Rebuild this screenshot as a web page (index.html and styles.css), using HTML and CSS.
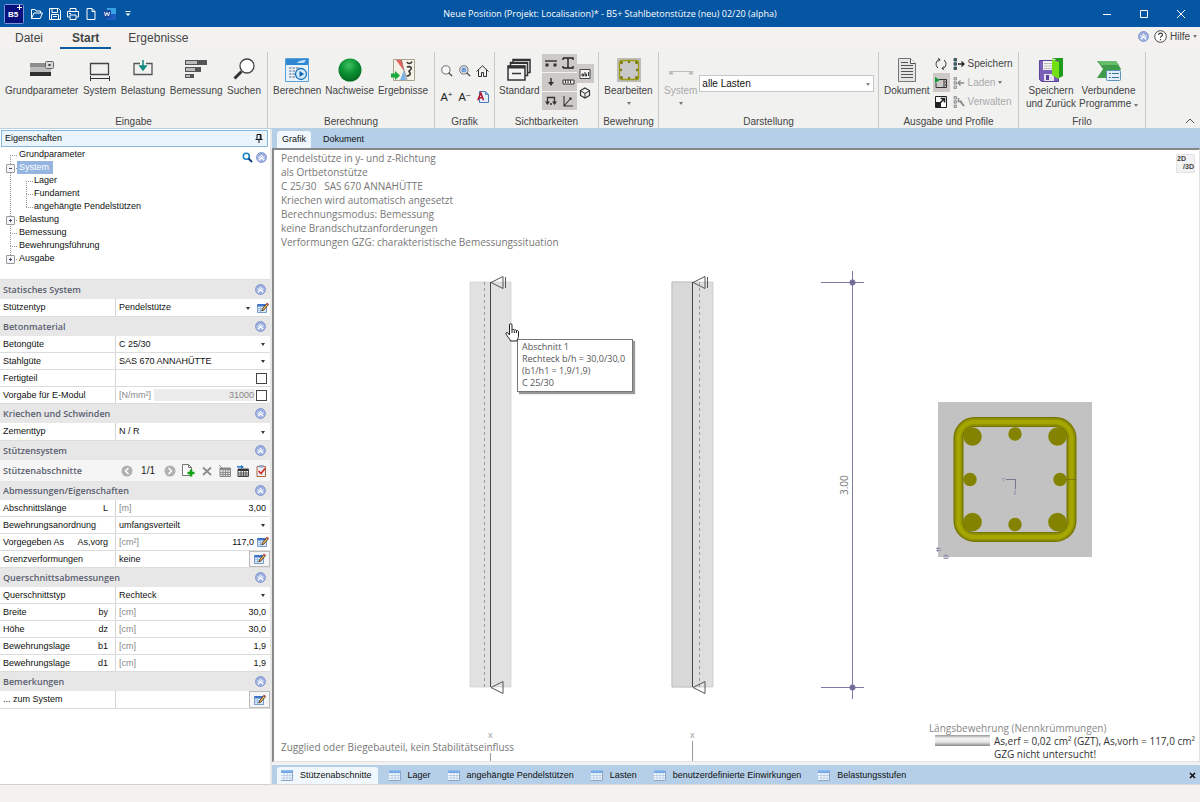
FILE: index.html
```
<!DOCTYPE html>
<html lang="de">
<head>
<meta charset="utf-8">
<title>B5+ Stahlbetonstütze</title>
<link rel="stylesheet" href="styles.css">
</head>
<body>
<svg class="sprite" aria-hidden="true">
  <symbol id="up" viewBox="0 0 12 12"><circle cx="6" cy="6" r="5.400" fill="#9fb4e4" stroke="#7d8fcb"/><path d="M3 6 6 3.200 9 6M3 9 6 6.200 9 9" fill="none" stroke="#fff" stroke-width="1.500"/><path d="M3.300 4.900 6 2.400 8.700 4.900" fill="none" stroke="#5068ba" stroke-width=".7"/></symbol>
  <symbol id="edit" viewBox="0 0 12 12"><path d="M.5 2.500h9v8h-9z" fill="#dcebfa" stroke="#5c86c0" stroke-width=".8"/><path d="M.5 2h9v2.500h-9z" fill="#3f74c8"/><path d="M.5 6.500h6M.5 8.500h5M3.500 4v6" stroke="#8fb2dc" stroke-width=".7"/><path d="m4.800 8.900.8-2.300 4.200-5.200 1.600 1.200-4.300 5.300z" fill="#f0b95c" stroke="#4c3a28" stroke-width=".9"/><path d="m9.400 1.900.9-1.100 1.400 1-.8 1.200z" fill="#d34a4a"/></symbol>
  <symbol id="grid" viewBox="0 0 12 11"><path d="M0 0h12v11H0z" fill="#f4f9fe"/><path d="M0 0h12v3H0z" fill="#72a5e4"/><path d="M0 0h12v1.500H0z" fill="#8fbaf0"/><path d="M0 5.500h12M0 8h12M3 3v8M6 3v8M9 3v8" stroke="#b4c9e2" stroke-width=".8"/><path d="M0 10.500h11.500V1" fill="none" stroke="#8ca4c6"/></symbol>
  <symbol id="lens" viewBox="0 0 14 14"><circle cx="5.700" cy="5.700" r="4.800" fill="#fafafa" stroke="#555"/><path d="m9 9 4 4" stroke="#444" stroke-width="1.500"/></symbol>
</svg>

<div class="app">
  <header class="titlebar">
    <div class="quick">
      <svg class="logo" width="20" height="20" viewBox="0 0 20 20"><rect x=".5" y=".5" width="19" height="19" rx="1" fill="#08117c" stroke="#7c98d6"/><text x="4" y="13" class="logo-text">B5</text><path d="M15.500 1v5M13 3.500h5" stroke="#fff"/></svg>
      <button aria-label="Öffnen"><svg width="12" height="12" viewBox="0 0 12 12"><path d="M.5 10.500v-9h3.500l1 1.500h4.500v2M.5 10.500 3 5h8.500l-2.300 5.500z" class="w"/></svg></button>
      <button aria-label="Speichern"><svg width="12" height="12" viewBox="0 0 12 12"><path d="M.5.5h9l2 2v9H.5zM3 .5v4h5.500v-4M2.500 11.500v-5h7v5M4 8.500h4" class="w"/></svg></button>
      <button aria-label="Drucken"><svg width="12" height="12" viewBox="0 0 12 12"><path d="M3 3.500v-3h6v3M2.500 9h-2V3.500h11V9h-2M3 7h6v4.500H3zM2 5.500h2" class="w"/></svg></button>
      <button aria-label="Neu"><svg width="12" height="12" viewBox="0 0 12 12"><path d="M2 .5h5l3 3v8H2zM7 .5v3h3" class="w"/></svg></button>
      <button aria-label="Word"><svg width="13" height="12" viewBox="0 0 13 12"><path d="M4 0h9v12H4z" fill="#35a2e6"/><path d="M4 6h9v6H4z" fill="#1c5fc4"/><rect y="2" width="8" height="8" fill="#1a4aa0"/><path d="m1.500 4 1 4L4 4.500 5.500 8l1-4" stroke="#fff" fill="none" stroke-width=".9"/></svg></button>
      <button aria-label="Mehr"><svg width="12" height="12" viewBox="0 0 12 12"><path d="M3.500 3.500h5" stroke="#fff"/><path d="M3.500 5.500h5L6 8z" fill="#fff"/></svg></button>
    </div>
    <h1>Neue Position (Projekt: Localisation)* - B5+ Stahlbetonstütze (neu) 02/20 (alpha)</h1>
    <div class="winbtns">
      <button aria-label="Minimieren"><svg width="10" height="10"><path d="M1 5.500h8" stroke="#fff"/></svg></button>
      <button aria-label="Maximieren"><svg width="10" height="10"><path d="M1.500 1.500h7v7h-7z" class="w"/></svg></button>
      <button aria-label="Schließen"><svg width="10" height="10"><path d="m1 1 8 8M9 1 1 9" class="w"/></svg></button>
    </div>
  </header>

  <nav class="menu">
    <a href="#">Datei</a><a href="#" class="on">Start</a><a href="#">Ergebnisse</a>
    <button class="help"><svg width="11" height="11"><use href="#up"/></svg><svg width="13" height="13" viewBox="0 0 13 13"><circle cx="6.500" cy="6.500" r="5.800" fill="#fff" stroke="#444"/><path d="M4.600 5c0-2.600 3.900-2.400 3.900-.2 0 1.500-2 1.400-2 3M6.500 9v1.300" fill="none" stroke="#333" stroke-width="1.100"/></svg>Hilfe<i class="tri"></i></button>
  </nav>

  <section class="ribbon">
    <div class="group">
      <div class="tools spread">
        <button class="big"><svg width="26" height="24" viewBox="0 0 26 24"><path d="M1 5h18v4H1z" fill="#8d8d8d"/><path d="M1 9h21v5H1z" fill="#bcbcbc"/><path d="M1 14h21v4H1z" fill="#2f2f2f"/><rect x="16.500" y="3.500" width="8" height="7" rx="1" fill="#d8d8d8" stroke="#666"/><path d="M19.500 6h2v2h-2z" fill="#333"/></svg>Grundparameter</button>
        <button class="big"><svg width="22" height="24" viewBox="0 0 22 24"><path d="M1.500 5.500h18v11h-18z" fill="none" stroke="#444" stroke-width="1.300"/><path d="M1 20.500h20M1.500 18v5M20.500 18v5" stroke="#333"/></svg>System</button>
        <button class="big"><svg width="22" height="24" viewBox="0 0 22 24"><path d="M8 5.500H2v11h18v-11h-6" fill="none" stroke="#555" stroke-width="1.300"/><path d="M11 2v9M8 8l3 4 3-4z" stroke="#158a80" stroke-width="1.500" fill="#158a80"/></svg>Belastung</button>
        <button class="big"><svg width="24" height="24" viewBox="0 0 24 24"><path d="M1 2h22v5H1zM1 9h16v5H1zM1 16h9v4H1z" fill="#555"/><path d="M2 3h11v3H2zM2 10h9v3H2zM2 17h4v2H2z" fill="#bbb"/></svg>Bemessung</button>
        <button class="big"><svg width="24" height="24" viewBox="0 0 24 24"><circle cx="15" cy="8" r="7" fill="#fff" stroke="#444" stroke-width="1.300"/><path d="m9.500 13.500-7 7" stroke="#333" stroke-width="3"/></svg>Suchen</button>
      </div>
      <div class="caption">Eingabe</div>
    </div>

    <div class="group">
      <div class="tools spread">
        <button class="big"><svg width="24" height="24" viewBox="0 0 24 24"><path d="M.5.5h23v23H.5z" fill="#e8f2fb" stroke="#5aa0d8"/><path d="M1 1h22v6H1z" fill="#2f86d2"/><path d="M12 5c2-3 6-3 9-3l-2 3z" fill="#b7dcf6"/><path d="M4 10h11M4 13h8M4 16h7M4 19h8" stroke="#8a9aa8" stroke-width="1.500" stroke-dasharray="2.500 1"/><circle cx="16" cy="16" r="5.500" fill="#d3eafa" stroke="#1973bd" stroke-width="1.300"/><path d="m14.500 13 4.500 3-4.500 3z" fill="#1766ab"/></svg>Berechnen</button>
        <button class="big"><svg width="24" height="24" viewBox="0 0 24 24"><defs><radialGradient id="ball" cx=".45" cy=".3" r=".7"><stop offset="0" stop-color="#3fc15f"/><stop offset=".5" stop-color="#0b9235"/><stop offset="1" stop-color="#046a20"/></radialGradient></defs><circle cx="12" cy="12" r="11.500" fill="url(#ball)"/></svg>Nachweise</button>
        <button class="big"><svg width="24" height="24" viewBox="0 0 24 24"><path d="M2.500 1.500h21v21h-21z" fill="#f4f1e6" stroke="#a9a28f"/><path d="M5 2h6l2 11z" fill="#e8625c"/><path d="M9 22h6l-2-10z" fill="#7db4e8"/><path d="m10 2 6 20" stroke="#777" stroke-width=".7"/><path d="M16 9c3-1 5 0 4 2s-3 2-1.500 3c2 2 0 4-3 4M16 4c1 2 4 2 5-.5" fill="none" stroke="#333" stroke-width="1.600"/><path d="M0 15.500h4V13l5 4.500L4 22v-2.500H0z" fill="#19a83b"/></svg>Ergebnisse</button>
      </div>
      <div class="caption">Berechnung</div>
    </div>

    <div class="group">
      <div class="tools iconset">
        <button aria-label="Zoom"><svg width="12" height="12"><use href="#lens"/></svg></button>
        <button aria-label="Zoom Fenster"><svg width="12" height="12" viewBox="0 0 14 14"><circle cx="5.700" cy="5.700" r="4.800" fill="#fafafa" stroke="#555"/><path d="m9 9 4 4" stroke="#444" stroke-width="1.500"/><path d="M3.500 3.500h4.500v4.500H3.500zM3.500 5.700H8M5.700 3.500V8" fill="#cfe4fa" stroke="#2b6ec2" stroke-width=".8"/></svg></button>
        <button aria-label="Alles"><svg width="13" height="12" viewBox="0 0 13 12"><path d="M.5 6.500 6.500.8l6 5.700M2.500 5v6.500h3v-4h2v4h3V5" fill="none" stroke="#333"/></svg></button>
        <button aria-label="Schrift größer">A<sup>+</sup></button>
        <button aria-label="Schrift kleiner">A<sup>–</sup></button>
        <button aria-label="Schriftart"><svg width="12" height="12" viewBox="0 0 12 12"><path d="M2.500.5h6l3 3v8h-9z" fill="#e3effb" stroke="#4a78b5"/><path d="M8.500.5v3h3" fill="#7fa8dd" stroke="#4a78b5" stroke-width=".7"/><path d="m.8 9.200 3-7.200 2.800 7.200M2 6.700h3.600" fill="none" stroke="#b3122a" stroke-width="1.500"/></svg></button>
      </div>
      <div class="caption">Grafik</div>
    </div>

    <div class="group">
      <div class="tools vis">
        <button class="big"><svg width="24" height="24" viewBox="0 0 24 24"><g fill="#f1f1f1" stroke="#333" stroke-width="1.500"><path d="M6 1.500h17v13H6z"/><path d="M3.500 4.500h17v13h-17z"/><path d="M1 8h17v14H1z"/></g><path d="M6 1h17v2H6zM3.500 4h17v2h-17zM1 7.500h17v3H1z" fill="#333"/><path d="M5 15.500h9" stroke="#333" stroke-width="1.500"/></svg>Standard</button>
        <div class="toggles">
          <button aria-label="Auflager"><svg width="14" height="14" viewBox="0 0 14 14"><path d="M1 5h12" stroke="#222" stroke-width="1.300"/><path d="M1.500 7.500h3v3h-3zM9.500 7.500h3v3h-3z" fill="#333"/></svg></button>
          <button aria-label="Profil"><svg width="14" height="14" viewBox="0 0 14 14"><path d="M2 2h10v2M2 2v2M2 12h10v-2M2 12v-2M7 2v10" fill="none" stroke="#222" stroke-width="1.400"/></svg></button>
          <button aria-label="Last"><svg width="14" height="14" viewBox="0 0 14 14"><path d="M7 3v5" stroke="#333" stroke-width="1.500"/><path d="M4 7h6l-3 4z" fill="#333"/></svg></button>
          <button aria-label="Bemaßung"><svg width="14" height="14" viewBox="0 0 14 14"><path d="M2 5h11v4H2zM4.500 5v3M7 5v3M9.500 5v3" fill="#eee" stroke="#333"/></svg></button>
          <button aria-label="Kräfte"><svg width="14" height="14" viewBox="0 0 14 14"><path d="M3.500 10V3.500h7V10M6 10h2" fill="none" stroke="#333" stroke-width="1.300"/><path d="M1 7.500h5L3.500 11zM8 7.500h5L10.500 11z" fill="#333"/></svg></button>
          <button aria-label="Achsen"><svg width="14" height="14" viewBox="0 0 14 14"><path d="M3 2v10h9M3 12l7-8M8 4h2v2" fill="none" stroke="#333" stroke-width="1.100"/></svg></button>
        </div>
        <div class="toggles2">
          <button class="down" aria-label="Texte"><svg width="12" height="12" viewBox="0 0 12 12"><path d="M1 1.500h10v9H1z" fill="#f4f4f4" stroke="#444"/><path d="M3 8V6h1.500v2zM6 4v4h1.500V6H6M9.500 4v4" fill="none" stroke="#222" stroke-width=".9"/></svg></button>
          <button aria-label="3D"><svg width="12" height="12" viewBox="0 0 12 12"><path d="M6 1 10.500 3.500v5L6 11 1.500 8.500v-5z" fill="none" stroke="#333" stroke-width="1.200"/><path d="m2 4 4 2.500L10 4M6 6.500V11" fill="none" stroke="#333"/></svg></button>
        </div>
      </div>
      <div class="caption">Sichtbarkeiten</div>
    </div>

    <div class="group">
      <div class="tools mid">
        <button class="big"><svg width="24" height="24" viewBox="0 0 24 24"><path d="M0 0h24v24H0z" fill="#bdbdbd"/><rect x="2.500" y="2.500" width="19" height="19" rx="2" fill="#c8c8c8" stroke="#9c9c10" stroke-width="1.300"/><g fill="#77770a"><circle cx="4.500" cy="4.500" r="1.500"/><circle cx="12" cy="4" r="1.200"/><circle cx="19.500" cy="4.500" r="1.500"/><circle cx="4" cy="12" r="1.200"/><circle cx="20" cy="12" r="1.200"/><circle cx="4.500" cy="19.500" r="1.500"/><circle cx="12" cy="20" r="1.200"/><circle cx="19.500" cy="19.500" r="1.500"/></g></svg>Bearbeiten<i class="tri"></i></button>
      </div>
      <div class="caption">Bewehrung</div>
    </div>

    <div class="group">
      <div class="tools view">
        <button class="big" disabled><svg width="26" height="24" viewBox="0 0 26 24"><path d="M1 13.500h24M1 16l2-3 2 3zM21 16l2-3 2 3z" stroke="#bbb" fill="#bbb"/></svg>System<i class="tri"></i></button>
        <div class="drop"><select aria-label="Lasten"><option>alle Lasten</option></select></div>
      </div>
      <div class="caption">Darstellung</div>
    </div>

    <div class="group">
      <div class="tools out">
        <button class="big"><svg width="20" height="24" viewBox="0 0 20 24"><path d="M1.500.5h12l5 5v18h-17z" fill="#e4e4e4" stroke="#777"/><path d="M13.500.5v5h5" fill="#fff" stroke="#555"/><path d="M4 4.500h7M4 7.500h12M4 10.500h12M4 13.500h12M4 16.500h12M4 19.500h12" stroke="#555"/></svg>Dokument</button>
        <div class="stack">
          <button aria-label="Aktualisieren"><svg width="12" height="12" viewBox="0 0 12 12"><path d="M4.500 1.500C.5 2.500 0 7.500 3 10M7.500 10.500C11.500 9.500 12 4.500 9 2M3 .5l2 1-1.500 2M9 11.500l-2-1 1.500-2" fill="none" stroke="#333"/></svg></button>
          <button class="down" aria-label="Ausgabe"><svg width="12" height="12" viewBox="0 0 12 12"><path d="M4 2.500h7.500v8H1V6M9 2.500v8M10 5h1M10 8h1" fill="none" stroke="#333"/><path d="m0 0 5 3-5 3z" fill="#179a3c"/></svg></button>
          <button aria-label="Vollbild"><svg width="12" height="12" viewBox="0 0 12 12"><path d="M.5.5h11v11H.5z" fill="#fff" stroke="#222"/><path d="M1 6h5v5H1z" fill="#222"/><path d="m5 7 4-4M5.500 2.500h4v4" fill="none" stroke="#222" stroke-width="1.600"/></svg></button>
        </div>
        <div class="stack text">
          <button><svg width="12" height="12" viewBox="0 0 12 12"><path d="M1 .5h2.500V3H1zM1 4.700h2.500v2.500H1zM1 9h2.500v2.500H1z" fill="#2b7b9b" stroke="#333" stroke-width=".8"/><path d="M5 6h6M8.500 3.500 11 6 8.500 8.500" fill="none" stroke="#222" stroke-width="1.300"/></svg>Speichern</button>
          <button disabled><svg width="12" height="12" viewBox="0 0 12 12"><path d="M1 .5h2.500V3H1zM1 4.700h2.500v2.500H1zM1 9h2.500v2.500H1z" fill="#ccc" stroke="#888" stroke-width=".8"/><path d="M5 6h6M7.500 3.500 5 6l2.500 2.500" fill="none" stroke="#888" stroke-width="1.300"/></svg>Laden<i class="tri"></i></button>
          <button disabled><svg width="12" height="12" viewBox="0 0 12 12"><path d="M1 .5h2.500V3H1zM1 4.700h2.500v2.500H1zM1 9h2.500v2.500H1z" fill="#ccc" stroke="#888" stroke-width=".8"/><path d="m7 5 4 5" stroke="#888" stroke-width="2"/><path d="M5.500 2v3.500H9" stroke="#888" stroke-width="1.500" fill="none"/></svg>Verwalten</button>
        </div>
      </div>
      <div class="caption">Ausgabe und Profile</div>
    </div>

    <div class="group">
      <div class="tools mid">
        <button class="big"><svg width="24" height="24" viewBox="0 0 24 24"><path d="M.5 2.500h19v21h-17l-2-2z" fill="#7a5fb8" stroke="#5b4498"/><path d="M4 3h10v9H4z" fill="#f2f2f5"/><path d="M5 5.500h9M5 8h9M5 10.500h9" stroke="#bbb"/><path d="M5 16h10v7H5z" fill="#e5e2ee"/><path d="M7 17h3v5H7z" fill="#5b4498"/><path d="M13 0h11v18l-4 2V3z" fill="#1e9b1c"/><path d="m13 1 7 3v17l-7-4z" fill="#72e012"/></svg>Speichern<br>und Zurück</button>
        <button class="big"><svg width="26" height="24" viewBox="0 0 26 24"><path d="M1 3h19l5 8-5 9H1l6-9z" fill="#3f9d4a"/><path d="M2 3h18l3 4H5z" fill="#67bd6a"/><rect x="10.500" y="12.500" width="14" height="10" rx="1" fill="#e2effa" stroke="#5a94bb"/><path d="M13 15.500h2M13 19.500h2M16 15.500h7M16 19.500h7" stroke="#42749a"/></svg>Verbundene<br><span>Programme <i class="tri"></i></span></button>
      </div>
      <div class="caption">Frilo</div>
    </div>
    <button class="fold" aria-label="Menüband einklappen"><svg width="10" height="6"><path d="m1 5 4-4 4 4" fill="none" stroke="#555"/></svg></button>
  </section>

  <main class="work">
    <aside class="props">
      <h2 class="panel-title">Eigenschaften<svg width="8" height="10" viewBox="0 0 8 10"><path d="M2 .5h4v5H2zM.5 5.500h7M4 5.500V9M5.300 1v4" fill="none" stroke="#111"/></svg></h2>
      <div class="treebox">
        <ul class="tree">
          <li><a href="#">Grundparameter</a></li>
          <li class="node minus"><a href="#" class="sel">System</a>
            <ul><li><a href="#">Lager</a></li><li><a href="#">Fundament</a></li><li><a href="#">angehängte Pendelstützen</a></li></ul></li>
          <li class="node"><a href="#">Belastung</a></li>
          <li><a href="#">Bemessung</a></li>
          <li><a href="#">Bewehrungsführung</a></li>
          <li class="node"><a href="#">Ausgabe</a></li>
        </ul>
        <div class="treetools"><button aria-label="Suchen"><svg width="11" height="11" viewBox="0 0 11 11"><circle cx="4.300" cy="4.300" r="3" fill="none" stroke="#1681c4" stroke-width="1.600"/><path d="m6.500 6.500 3.500 3.500" stroke="#123f7d" stroke-width="2"/></svg></button><button aria-label="Einklappen"><svg width="11" height="11"><use href="#up"/></svg></button></div>
      </div>

      <form class="grid">
        <h3>Statisches System<svg width="11" height="11"><use href="#up"/></svg></h3>
        <div class="row tall"><label for="f1">Stützentyp</label><div class="drop"><select id="f1"><option>Pendelstütze</option></select></div><button type="button" class="ed" aria-label="Bearbeiten"><svg width="12" height="12"><use href="#edit"/></svg></button></div>
        <h3>Betonmaterial<svg width="11" height="11"><use href="#up"/></svg></h3>
        <div class="row"><label for="f2">Betongüte</label><div class="drop"><select id="f2"><option>C 25/30</option></select></div></div>
        <div class="row"><label for="f3">Stahlgüte</label><div class="drop"><select id="f3"><option>SAS 670 ANNAHÜTTE</option></select></div></div>
        <div class="row"><label for="f4">Fertigteil</label><span class="fill"></span><input type="checkbox" id="f4"></div>
        <div class="row"><label for="f5">Vorgabe für E-Modul</label><span class="unit">[N/mm²]</span><input type="text" id="f5" value="31000" disabled><input type="checkbox" aria-label="E-Modul vorgeben"></div>
        <h3>Kriechen und Schwinden<svg width="11" height="11"><use href="#up"/></svg></h3>
        <div class="row tall"><label for="f6">Zementtyp</label><div class="drop"><select id="f6"><option>N / R</option></select></div></div>
        <h3>Stützensystem<svg width="11" height="11"><use href="#up"/></svg></h3>
        <div class="pager"><span>Stützenabschnitte</span>
          <button type="button" aria-label="Zurück"><svg width="12" height="12" viewBox="0 0 12 12"><circle cx="6" cy="6" r="5.500" fill="#b1b1b1"/><path d="M7.500 3 4.500 6l3 3" fill="none" stroke="#fff" stroke-width="1.500"/></svg></button>
          <output>1/1</output>
          <button type="button" aria-label="Weiter"><svg width="12" height="12" viewBox="0 0 12 12"><circle cx="6" cy="6" r="5.500" fill="#b1b1b1"/><path d="m4.500 3 3 3-3 3" fill="none" stroke="#fff" stroke-width="1.500"/></svg></button>
          <button type="button" aria-label="Neu"><svg width="13" height="13" viewBox="0 0 13 13"><path d="M.5.5h6l3 3v8h-9z" fill="#fff" stroke="#777"/><path d="M6.500.5v3h3" fill="none" stroke="#777"/><path d="M9 5.500v7M5.500 9h7" stroke="#14a314" stroke-width="2.600"/></svg></button>
          <button type="button" aria-label="Löschen"><svg width="12" height="12" viewBox="0 0 12 12"><path d="m2 2.500 8 7.500M10 2.500 2 10" stroke="#8b8b8b" stroke-width="1.800"/></svg></button>
          <button type="button" aria-label="Tabelle"><svg width="12" height="12" viewBox="0 0 12 12"><path d="M1 3h10.500v8.500H1z" fill="#e2e2e2" stroke="#888"/><path d="M1 3h10v2H1z" fill="#888"/><path d="M1 7.500h10M1 9.500h10M4 5v6M6.500 5v6M9 5v6M0 0l4 4" stroke="#888" stroke-width=".9"/></svg></button>
          <button type="button" aria-label="Einfügen"><svg width="12" height="12" viewBox="0 0 12 12"><path d="M1 4h10.500v7.500H1z" fill="#fff" stroke="#444"/><path d="M1 4h10v2H1z" fill="#333"/><path d="M1 8h10M1 10h10M4 5v6M6.500 5v6M9 5v6" stroke="#444" stroke-width=".9"/><path d="M0 1.800h5" stroke="#1673cc" stroke-width="1.400"/><path d="M4 0v3.800L7 2z" fill="#1673cc"/></svg></button>
          <button type="button" aria-label="Prüfen"><svg width="12" height="12" viewBox="0 0 12 12"><path d="M2 1.500h8.500v10H2z" fill="#e7eefa" stroke="#b0683c"/><path d="M4 0h4.500v2.500H4z" fill="#98a8c4"/><path d="m3.500 6 2.500 2.500L10 3.500" fill="none" stroke="#d8281e" stroke-width="1.600"/></svg></button>
        </div>
        <h3>Abmessungen/Eigenschaften<svg width="11" height="11"><use href="#up"/></svg></h3>
        <div class="row"><label for="g1">Abschnittslänge<b>L</b></label><span class="unit">[m]</span><input type="text" id="g1" value="3,00"></div>
        <div class="row"><label for="g2">Bewehrungsanordnung</label><div class="drop"><select id="g2"><option>umfangsverteilt</option></select></div></div>
        <div class="row"><label for="g3">Vorgegeben As<b>As,vorg</b></label><span class="unit">[cm²]</span><input type="text" id="g3" value="117,0"><button type="button" class="ed" aria-label="Bearbeiten"><svg width="12" height="12"><use href="#edit"/></svg></button></div>
        <div class="row"><label for="g4">Grenzverformungen</label><input type="text" class="left" id="g4" value="keine"><button type="button" class="ed box" aria-label="Bearbeiten"><svg width="12" height="12"><use href="#edit"/></svg></button></div>
        <h3>Querschnittsabmessungen<svg width="11" height="11"><use href="#up"/></svg></h3>
        <div class="row"><label for="h1">Querschnittstyp</label><div class="drop"><select id="h1"><option>Rechteck</option></select></div></div>
        <div class="row"><label for="h2">Breite<b>by</b></label><span class="unit">[cm]</span><input type="text" id="h2" value="30,0"></div>
        <div class="row"><label for="h3">Höhe<b>dz</b></label><span class="unit">[cm]</span><input type="text" id="h3" value="30,0"></div>
        <div class="row"><label for="h4">Bewehrungslage<b>b1</b></label><span class="unit">[cm]</span><input type="text" id="h4" value="1,9"></div>
        <div class="row"><label for="h5">Bewehrungslage<b>d1</b></label><span class="unit">[cm]</span><input type="text" id="h5" value="1,9"></div>
        <h3>Bemerkungen<svg width="11" height="11"><use href="#up"/></svg></h3>
        <div class="row tall"><label for="k1">... zum System</label><input type="text" class="left" id="k1" value=""><button type="button" class="ed box" aria-label="Bearbeiten"><svg width="12" height="12"><use href="#edit"/></svg></button></div>
      </form>
    </aside>

    <section class="stage">
      <nav class="tabs top"><a href="#" class="on">Grafik</a><a href="#">Dokument</a></nav>
      <div class="canvas">
        <svg class="drawing" width="928" height="612" viewBox="0 0 928 612">
          <g class="column-y">
            <path d="M198 133h41v405h-41z" fill="#e1e1e1" stroke="#cfcfcf" stroke-width=".7"/>
            <path d="M212.500 133v405" stroke="#999" stroke-dasharray="3 3"/>
            <path d="M218.500 133v405" stroke="#444"/>
            <path d="m219 133.500 12-6v12zM233.500 128v11M219 538.500l12-6v12z" class="sup"/>
          </g>
          <g class="column-z">
            <path d="M400 133h41v405h-41z" fill="#dedede" stroke="#c4c4c4" stroke-width=".7"/>
            <path d="M400 133h20.500v405H400z" fill="#d8d8d8" stroke="#b5b5b5" stroke-width=".7"/>
            <path d="M427.500 133v405" stroke="#999" stroke-dasharray="3 3"/>
            <path d="M420.500 133v405" stroke="#444"/>
            <path d="m421 133.500 12-6v12zM435.500 128v11M421 538.500l12-6v12z" class="sup"/>
          </g>
          <g stroke="#7f7aa6" fill="#6f6a94">
            <path d="M580.500 122v428M549 133.500h43M549 538.500h43"/>
            <circle cx="580.500" cy="133.500" r="2.700"/><circle cx="580.500" cy="538.500" r="2.700"/>
          </g>
          <text class="dim" transform="translate(576 346) rotate(-90)">3.00</text>
          <path d="M218.500 604v8M420.500 592v20" stroke="#999"/>
          <text class="ax" x="216" y="589">x</text><text class="ax" x="418" y="589">x</text>
          <g class="cross-section">
            <path d="M666 253h154v155H666z" fill="#c2c2c2"/>
            <g fill="none"><rect x="686.500" y="273" width="113" height="115" rx="16" stroke="#757500" stroke-width="10"/><rect x="686.500" y="273" width="113" height="115" rx="16" stroke="#929200" stroke-width="7.500"/><rect x="686.500" y="273" width="113" height="115" rx="16" stroke="#a6a600" stroke-width="4"/></g>
            <g fill="#838300"><circle cx="700.500" cy="287.500" r="9.300"/><circle cx="785.500" cy="287.500" r="9.300"/><circle cx="700.500" cy="373" r="9.300"/><circle cx="785.500" cy="373" r="9.300"/><circle cx="743" cy="285" r="6.700"/><circle cx="743" cy="375.500" r="6.700"/><circle cx="698" cy="330.500" r="6.700"/><circle cx="788" cy="330.500" r="6.700"/></g>
            <path d="M794 330.500h10" stroke="#6b6b00" stroke-width=".7"/>
            <path d="M734 330.500h9.500v9.500" fill="none" stroke="#77748f"/>
            <path d="m730 329 1.500 1.500 1.500-1.500M731.500 330.500v2M742 342h2l-2 3h2M664 399.500h5M664 401.500h5M665.500 398v5M672 406.500h4v3h-4zM674 405v5" fill="none" stroke="#8f8cac" stroke-width=".8"/>
          </g>
        </svg>
        <div class="notes">
          <p>Pendelstütze in y- und z-Richtung</p><p>als Ortbetonstütze</p><p>C 25/30 &nbsp; SAS 670 ANNAHÜTTE</p><p>Kriechen wird automatisch angesetzt</p><p>Berechnungsmodus: Bemessung</p><p>keine Brandschutzanforderungen</p><p>Verformungen GZG: charakteristische Bemessungssituation</p>
        </div>
        <button class="dimswitch" aria-label="2D/3D"><span>2D</span><span>/3D</span></button>
        <div class="foot">
          <p>Zugglied oder Biegebauteil, kein Stabilitätseinfluss</p>
          <div class="legend"><p>Längsbewehrung (Nennkrümmungen)</p><i class="bar"></i><p class="dark">As,erf = 0,02 cm² (GZT), As,vorh = 117,0 cm²</p><p class="dark last">GZG nicht untersucht!</p></div>
        </div>
        <div class="tip" role="tooltip">Abschnitt 1<br>Rechteck b/h = 30,0/30,0<br>(b1/h1 = 1,9/1,9)<br>C 25/30</div>
        <svg class="cursor" width="15" height="19" viewBox="0 0 15 19"><path d="M4.500 12V2c0-1.800 2.500-1.800 2.500 0v5c.4-1 2.200-.9 2.300.3.500-.9 2.100-.6 2.200.5.600-.8 2-.3 2 .9v4.500c0 2-1.500 2.800-1.500 4.800H5.500C5 15.500 2 13.500 1 11c-.4-1.500 1-2 2-1z" fill="#fff" stroke="#222"/><path d="M7 7v3M9.300 7.500V10M11.500 8v2" stroke="#222"/></svg>
      </div>
      <nav class="tabs bottom">
        <a href="#" class="on"><svg width="12" height="11"><use href="#grid"/></svg>Stützenabschnitte</a>
        <a href="#"><svg width="12" height="11"><use href="#grid"/></svg>Lager</a>
        <a href="#"><svg width="12" height="11"><use href="#grid"/></svg>angehängte Pendelstützen</a>
        <a href="#"><svg width="12" height="11"><use href="#grid"/></svg>Lasten</a>
        <a href="#"><svg width="12" height="11"><use href="#grid"/></svg>benutzerdefinierte Einwirkungen</a>
        <a href="#"><svg width="12" height="11"><use href="#grid"/></svg>Belastungsstufen</a>
        <button aria-label="Schließen"><svg width="7" height="7"><path d="m1 1 5 5M6 1 1 6" stroke="#111" stroke-width="1.600"/></svg></button>
      </nav>
    </section>
  </main>
  <footer class="status"></footer>
</div>
</body>
</html>
```
FILE: styles.css
```
:root {
  --ribbon-font: "Liberation Sans", Arial, sans-serif;
  --panel-font: "Liberation Sans", Arial, sans-serif;
  --draw-font: "Open Sans", "Noto Sans", sans-serif;
}
* { box-sizing: border-box; margin: 0; padding: 0; }
body { font: 10px/12px var(--ribbon-font); color: #444; background: #f3f2f1; }
a { color: inherit; text-decoration: none; }
button { font: inherit; color: inherit; background: none; border: 0; }
button, a { display: flex; align-items: center; }
svg { flex: none; display: block; }
ul { list-style: none; }
.sprite { position: absolute; width: 0; height: 0; }
.w { fill: none; stroke: #fff; }
.tri { display: inline-block; border: 2px solid transparent; border-top: 3px solid #777; border-bottom: 0; }
.app { display: flex; flex-direction: column; min-height: 100vh; }

.titlebar { display: grid; grid-template-columns: 1fr auto 1fr; align-items: center; height: 27px; background: #0455a2; color: #fff; padding: 0 4px; }
.titlebar h1 { font: 9px/12px var(--draw-font); padding-left: 20px; }
.quick { display: flex; align-items: center; gap: 6px; }
.logo { margin-right: 1px; }
.logo-text { font: bold 8px var(--ribbon-font); fill: #fff; }
.winbtns { display: flex; justify-content: flex-end; gap: 27px; padding-right: 10px; }

.menu { display: flex; align-items: stretch; height: 22px; padding: 0 3px 0 9px; gap: 11px; font-size: 12px; line-height: 14px; }
.menu a { padding: 2px 6px 0; border-bottom: 2px solid transparent; }
.menu .on { font-weight: bold; padding: 2px 12px 0; border-color: #0f5c9f; }
.help { margin-left: auto; gap: 3px; font-size: 10px; padding-bottom: 3px; }
.help svg:first-child { margin-right: 2px; }

.ribbon { display: flex; height: 80px; padding: 3px 0 0; border-bottom: 1px solid #b9d0e0; position: relative; background: #f1f1f0; }
.group { display: flex; flex-direction: column; border-right: 1px solid #c9c9c9; height: 76px; padding: 0 4px; white-space: nowrap; }
.group:nth-child(1) { width: 268px; }
.group:nth-child(2) { width: 167px; }
.group:nth-child(3) { width: 60px; padding: 0; }
.group:nth-child(4) { width: 104px; }
.group:nth-child(5) { width: 60px; padding: 0; }
.group:nth-child(6) { flex: 0 1 220px; }
.group:nth-child(7) { width: 140px; }
.group:nth-child(8) { width: 127px; }
.tools { flex: 1; display: flex; }
.spread { justify-content: space-between; padding: 0 2px 0 1px; }
.mid { justify-content: space-evenly; }
.caption { text-align: center; line-height: 12px; }
.big { flex-direction: column; justify-content: flex-start; padding-top: 6px; line-height: 13px; gap: 2px; align-self: flex-start; text-align: center; }
.big > .tri { margin-top: 3px; }
.big br + span { margin-top: -2px; }
button:disabled { color: #aaa; }
.iconset { display: grid; grid-template: 26px 26px / repeat(3, 18px); justify-content: center; justify-items: center; padding-top: 6px; }
.iconset button { font: 11px var(--panel-font); color: #222; }
.iconset sup { font-size: 8px; margin-bottom: 6px; }
.vis { gap: 2px; }
.toggles { display: grid; grid-template: repeat(3, 18px) / 18px 17px; gap: 1px 0; padding-top: 2px; flex: none; align-content: start; }
.toggles button { background: #ccc9c6; justify-content: center; }
.toggles2 { display: flex; flex-direction: column; padding-top: 12px; margin-left: -2px; }
.toggles2 button { width: 17px; height: 19px; justify-content: center; }
.down { background: #ccc9c6; }
.view { gap: 2px; padding-left: 1px; }
.view .drop { align-self: flex-start; margin: 23px 0 0; height: 17px; background: #fff; border: 1px solid #c6c6c6; }
.view .drop::after { border-top-color: #888; }
.view select { font: 10px/15px var(--ribbon-font); padding-left: 2px; }
.out { gap: 3px; padding-left: 1px; }
.stack { display: flex; flex-direction: column; padding-top: 2px; }
.stack button { height: 19px; min-width: 17px; gap: 3px; justify-content: center; }
.stack.text button { justify-content: flex-start; }
.fold { position: absolute; right: 5px; bottom: 4px; }

.drop { display: flex; position: relative; flex: 1; min-width: 0; }
.drop::after { content: ""; position: absolute; right: 3px; top: 50%; margin-top: -1px; border: 2px solid transparent; border-top: 3px solid #333; border-bottom: 0; pointer-events: none; }
select { appearance: none; border: 0; background: none; width: 100%; font: 9px/15px var(--panel-font); color: #111; }

.work { flex: 1; display: flex; }
.props { width: 272px; flex: none; display: flex; flex-direction: column; background: #fff; border-right: 2px solid #e8e8e8; border-bottom: 1px solid #d0d0d0; font: 9px/13px var(--panel-font); color: #111; }
.panel-title { display: flex; justify-content: space-between; align-items: center; height: 17px; margin: 1px 2px 0 1px; padding: 0 4px 0 3px; border: 1px solid #86b8dc; background: #e9f4fc; font: 9px/13px var(--panel-font); }
.treebox { position: relative; height: 133px; padding: 1px 0 0 10px; border-bottom: 1px solid #e0e0e0; }
.tree > li { position: relative; padding-left: 9px; }
.tree > li::before, .tree ul li::before { content: ""; position: absolute; left: 0; top: 0; width: 7px; height: 7px; border-bottom: 1px dotted #999; }
.tree > li:not(:last-child)::after, .tree ul li:not(:last-child)::after { content: ""; position: absolute; left: 0; top: 7px; bottom: -7px; border-left: 1px dotted #999; }
.tree a { width: max-content; height: 13px; }
.tree ul { padding-left: 7px; }
.tree ul li { position: relative; padding-left: 8px; }
.tree .sel { background: #95b5e0; color: #fff; margin-left: -2px; padding: 0 4px 0 2px; }
.tree .node > a::before { content: ""; position: absolute; z-index: 1; left: -4px; top: 3px; width: 7px; height: 7px; border: 1px solid #999; border-radius: 1px; background: linear-gradient(#446, #446) center / 3px 1px no-repeat, linear-gradient(#446, #446) center / 1px 3px no-repeat, #f4f6fa; }
.tree .minus > a::before { background: linear-gradient(#446, #446) center / 3px 1px no-repeat, #f4f6fa; }
.treetools { position: absolute; right: 3px; top: 5px; display: flex; gap: 3px; }

.grid h3 { display: flex; justify-content: space-between; align-items: center; height: 19px; padding: 0 4px 0 3px; background: #e7e7e7; color: #5a6070; font: 600 9px/13px var(--draw-font); }
.row { display: flex; align-items: stretch; height: 17px; border-bottom: 1px solid #dcdcdc; line-height: 16px; }
.row.tall { height: 18px; }
.row label { display: flex; justify-content: space-between; width: 116px; flex: none; padding: 0 7px 0 3px; border-right: 1px solid #d5d5d5; }
.row b { font-weight: normal; }
.row .drop { padding-left: 3px; }
.row .drop::after { right: 5px; }
.fill { flex: 1; }
.unit { width: 38px; padding-left: 3px; color: #888; }
input[type=text] { flex: 1; min-width: 0; border: 0; background: none; text-align: right; padding: 0 4px; font: 9px/14px var(--panel-font); color: #111; }
input[type=text]:has(+ .ed), input[type=text]:disabled { padding-right: 1px; }
input[type=text].left { text-align: left; padding-left: 3px; }
input[type=text]:disabled { background: #ececec; color: #888; margin: 2px 0; }
input[type=checkbox] { appearance: none; align-self: center; width: 11px; height: 11px; border: 1px solid #444; background: #fff; margin: 0 3px 0 1px; }
.ed { width: 15px; justify-content: center; }
.ed.box { width: 21px; border: 1px solid #bbb; background: #f5f5f5; }
.pager { display: flex; align-items: center; height: 21px; gap: 6px; padding: 0 3px; background: #f5f5f5; color: #5a6070; font: 600 9px/13px var(--draw-font); }
.pager span { flex: 1; }
.pager output { font: 10px/13px var(--panel-font); color: #222; padding: 0 3px 0 2px; }

.stage { flex: 1; min-width: 0; display: flex; flex-direction: column; }
.tabs { display: flex; background: #b4cfe7; font: 9px/13px var(--panel-font); color: #111; padding-left: 5px; }
.tabs a { border-radius: 3px 3px 0 0; }
.tabs .on { background: #f0f8fd; }
.top { height: 19px; padding-top: 2px; }
.top a { padding: 0 5px; margin-right: 7px; }
.canvas { position: relative; flex: 1; display: flex; flex-direction: column; justify-content: space-between; background: #fff; border: 1px solid #e2e2e2; border-left: 2px solid #858989; border-top: 2px solid #858989; padding: 1px 4px 0 7px; font: 10px/14px var(--draw-font); color: #777; overflow: hidden; margin-bottom: 3px; }
.drawing { position: absolute; left: -2px; top: -1px; }
.notes, .foot { position: relative; }
.sup { fill: none; stroke: #555; }
.dim, .ax { font: 10px var(--draw-font); fill: #777; }
.ax { font-size: 9px; fill: #999; }
.foot { display: flex; justify-content: space-between; align-items: flex-start; }
.foot > p { padding-top: 19px; }
.legend { display: grid; grid-template-columns: auto auto; column-gap: 4px; line-height: 14px; color: #888; }
.legend p:first-child { grid-column: 1 / 3; }
.legend .bar { width: 55px; height: 11px; margin-left: 6px; background: linear-gradient(#999, #f4f4f4 30%, #e6e6e6 65%, #888); }
.legend .dark { color: #333; line-height: 13px; }
.legend .last { grid-column: 2; }
.dimswitch { position: absolute; right: 4px; top: 4px; width: 19px; height: 19px; flex-direction: column; background: #f2f2f2; font: bold 7px/8px var(--ribbon-font); color: #444; border: 1px solid #e4e4e4; }
.dimswitch span { align-self: flex-start; }
.dimswitch span + span { align-self: flex-end; }
.tip { position: absolute; left: 243px; top: 189px; width: 116px; padding: 1px 4px 2px; background: #fff; border: 1px solid #777; box-shadow: 2px 2px 1px #999; font: 9px/12px var(--draw-font); color: #555; white-space: nowrap; }
.cursor { position: absolute; left: 231px; top: 173px; }
.bottom { height: 20px; gap: 7px; padding-top: 2px; border-bottom: 1px solid #d8d8d8; padding-right: 4px; }
.bottom a { gap: 7px; padding: 0 6px 0 4px; white-space: nowrap; }
.bottom button { margin-left: auto; }
.status { height: 17px; background: #f3f2f1; }
```
